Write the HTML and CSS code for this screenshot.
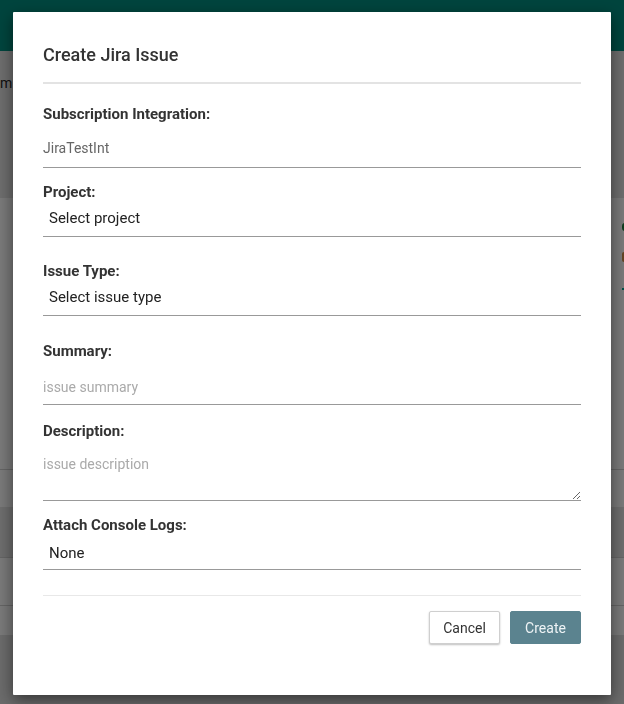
FILE: index.html
```html
<!DOCTYPE html>
<html lang="en">
<head>
<meta charset="utf-8">
<title>Create Jira Issue</title>
<link rel="stylesheet" href="styles.css">
</head>
<body>
<div class="page">
  <header class="topbar"></header>
  <section class="intro"><span class="intro-text">m</span></section>
  <section class="panel">
    <div class="marks">
      <span class="mark mark-green"></span>
      <span class="mark mark-brown"></span>
      <span class="mark mark-dash"></span>
    </div>
  </section>
  <div class="row row-light"></div>
  <div class="row row-dark"></div>
  <div class="row row-light row-line"></div>
  <div class="row row-light row-line row-short"></div>
  <div class="row-rest"></div>
</div>

<div class="overlay">
  <div class="modal">
    <h2 class="modal-title">Create Jira Issue</h2>
    <hr class="title-rule">

    <div class="group group-input">
      <label class="label">Subscription Integration:</label>
      <input class="field field-readonly" type="text" value="JiraTestInt" readonly>
    </div>

    <div class="group group-select">
      <label class="label">Project:</label>
      <select class="field field-select"><option>Select project</option></select>
    </div>

    <div class="group group-select group-wide">
      <label class="label">Issue Type:</label>
      <select class="field field-select"><option>Select issue type</option></select>
    </div>

    <div class="group group-summary">
      <label class="label">Summary:</label>
      <input class="field field-summary" type="text" placeholder="issue summary">
    </div>

    <div class="group group-input">
      <label class="label">Description:</label>
      <textarea class="field field-area" placeholder="issue description"></textarea>
    </div>

    <div class="group group-last">
      <label class="label">Attach Console Logs:</label>
      <select class="field field-select field-select-last"><option>None</option></select>
    </div>

    <div class="footer">
      <button class="btn btn-cancel" type="button">Cancel</button>
      <button class="btn btn-create" type="button">Create</button>
    </div>
  </div>
</div>
</body>
</html>
```

FILE: styles.css
```css
* { box-sizing: border-box; }

html, body {
  margin: 0;
  padding: 0;
  width: 624px;
  height: 704px;
  overflow: hidden;
  font-family: Roboto, "Liberation Sans", sans-serif;
}

/* ---------- background page ---------- */
.page {
  width: 624px;
  height: 704px;
  background: #dcdcdc;
  display: flex;
  flex-direction: column;
}
.topbar {
  height: 51px;
  background: #00897b;
  flex: none;
}
.intro {
  height: 147px;
  background: #dadada;
  flex: none;
  padding-top: 22px;
}
.intro-text {
  font-size: 14px;
  color: #222;
}
.panel {
  height: 271px;
  background: #f2f2f2;
  flex: none;
  display: flex;
  justify-content: flex-end;
}
.marks {
  display: flex;
  flex-direction: column;
  align-items: flex-end;
  padding-top: 25px;
  margin-right: -10px;
}
.mark {
  display: block;
  width: 12px;
}
.mark-green {
  height: 8px;
  border-radius: 3px;
  background: #1f7a3c;
}
.mark-brown {
  height: 10px;
  margin-top: 21px;
  border-radius: 2px;
  background: #c98a48;
}
.mark-dash {
  height: 2px;
  margin-top: 26px;
  background: #00a08e;
}
.row {
  flex: none;
  height: 38px;
}
.row-light { background: #f2f2f2; border-top: 1px solid #c8c8c8; }
.row-dark { background: #dadada; height: 50px; }
.row-line { height: 48px; }
.row-short { height: 30px; }
.row-rest { flex: 1; background: #d6d6d6; }

/* ---------- overlay + modal ---------- */
.overlay {
  position: fixed;
  inset: 0;
  background: rgba(0, 0, 0, 0.5);
  padding: 12px 13px;
}
.modal {
  width: 598px;
  height: 683px;
  background: #fff;
  border-radius: 1px;
  box-shadow: 0 5px 15px rgba(0, 0, 0, 0.5);
  padding: 31px 30px 0;
  color: #333;
}
.modal-title {
  margin: 0;
  font-size: 18px;
  line-height: 24px;
  font-weight: 500;
  color: #333;
}
.title-rule {
  margin: 15px 0 20px;
  border: 0;
  height: 2px;
  background: #e3e3e3;
}

.group { display: flex; flex-direction: column; }
.group-input { margin-bottom: 14px; }
.group-select { margin-bottom: 24px; }
.group-wide { margin-bottom: 25px; }
.group-summary { margin-bottom: 16px; }
.group-last { margin-bottom: 25px; }

.label {
  font-size: 15px;
  line-height: 20px;
  font-weight: 700;
  color: #333;
  margin-bottom: 4px;
}

.field {
  display: block;
  width: 100%;
  height: 40px;
  margin: 0;
  padding: 10px 0 9px;
  border: 0;
  border-bottom: 1px solid #999;
  border-radius: 0;
  background: transparent;
  font-family: Roboto, "Liberation Sans", sans-serif;
  font-size: 14px;
  line-height: 20px;
  color: #555;
  outline: none;
}
.field::placeholder { color: #aaa; opacity: 1; }
.field-readonly { color: #666; }
.field-summary { padding: 12px 0 7px; }

.field-select {
  -webkit-appearance: none;
  appearance: none;
  height: 31px;
  padding: 1px 6px 7px;
  font-size: 15px;
  color: #222;
}
.field-select-last {
  height: 31px;
  padding: 3px 6px 5px;
}

.field-area {
  height: 56px;
  padding: 9px 0 0;
  resize: vertical;
  overflow: hidden;
}

.footer {
  border-top: 1px solid #e8e8e8;
  padding-top: 15px;
  display: flex;
  justify-content: flex-end;
  gap: 10px;
}
.btn {
  width: 71px;
  height: 33px;
  border-radius: 2px;
  font-family: Roboto, "Liberation Sans", sans-serif;
  font-size: 14px;
  padding: 0;
  cursor: pointer;
}
.btn-cancel {
  background: #fff;
  color: #333;
  border: 1px solid #cfcfcf;
  box-shadow: 0 1px 2px rgba(0, 0, 0, 0.25);
}
.btn-create {
  background: #5b838f;
  color: #eef3f5;
  border: 1px solid #5b838f;
}
```
